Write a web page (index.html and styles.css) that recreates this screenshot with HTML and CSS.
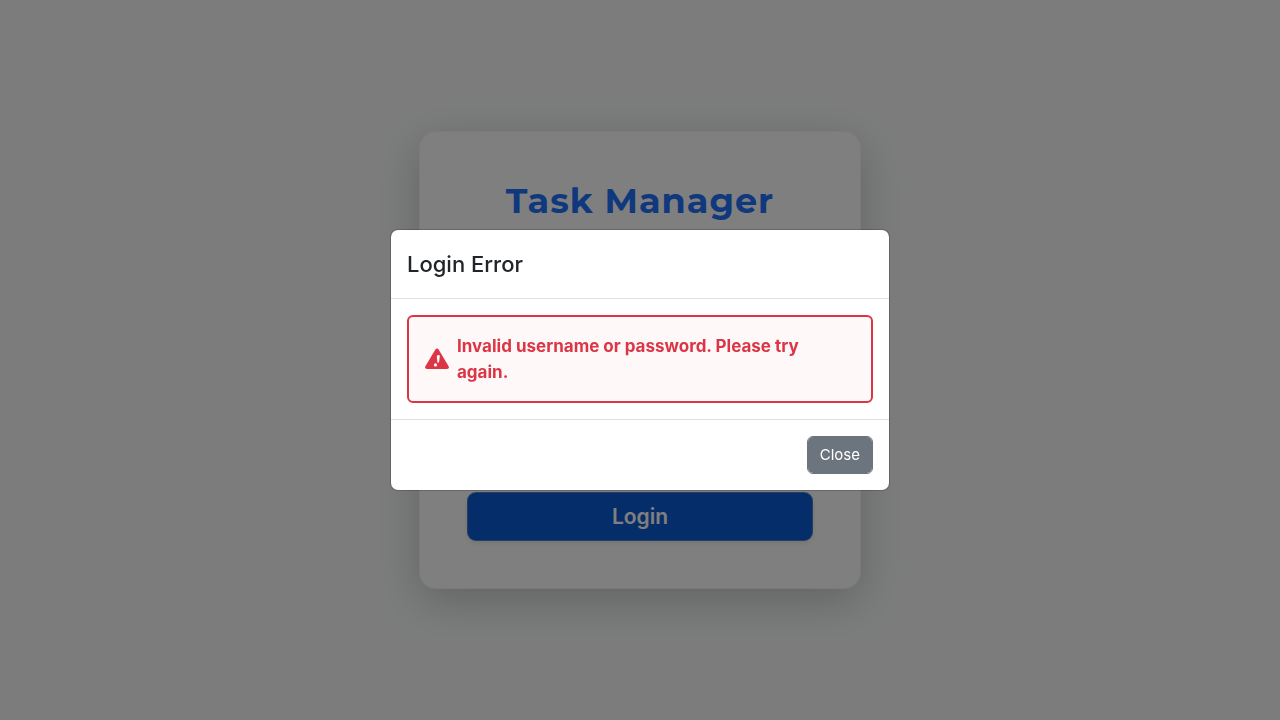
FILE: index.html
```html
<!DOCTYPE html>
<html lang="en">
<head>
<meta charset="utf-8">
<meta name="viewport" content="width=device-width, initial-scale=1">
<title>Task Manager</title>
<link rel="stylesheet" href="styles.css">
</head>
<body>
<main class="page">
  <section class="card">
    <h1 class="brand">Task Manager</h1>
    <button class="login" type="submit">Login</button>
  </section>
</main>
<div class="overlay">
  <div class="dialog" role="dialog" aria-modal="true" aria-labelledby="dialog-title">
    <header class="dialog-header">
      <h2 class="dialog-title" id="dialog-title">Login Error</h2>
    </header>
    <div class="dialog-body">
      <div class="alert" role="alert">
        <svg class="alert-icon" viewBox="0 0 24 24" aria-hidden="true">
          <path fill="#dc3545" d="M10.4 2.4Q12 .4 13.6 2.4L23.6 19.2Q24.6 21.9 22 22H2Q-.6 21.9.4 19.2Z"/>
          <path fill="#fff" d="M11.8 8.9Q13.2 7.4 14.9 8.6L14 15.4H12.4Z"/>
          <circle cx="10.5" cy="17.9" r="1.6" fill="#fff"/>
        </svg>
        <span>Invalid username or password. Please try again.</span>
      </div>
    </div>
    <footer class="dialog-footer">
      <button class="close" type="button">Close</button>
    </footer>
  </div>
</div>
</body>
</html>
```
FILE: styles.css
```css
* { box-sizing: border-box; }
body {
  margin: 0;
  font-family: Inter, "Liberation Sans", sans-serif;
  font-size: 16px;
  line-height: 24px;
  color: #212529;
  background: #f8f9fa;
}
.page {
  min-height: 100vh;
  display: grid;
  place-items: center;
}
.card {
  display: flex;
  flex-direction: column;
  justify-content: space-between;
  width: 100%;
  max-width: 440px;
  min-height: 456px;
  padding: 48px;
  border-radius: 16px;
  background: #fff;
  box-shadow: 0 0 0 1px #f4f4f4, 0 12px 44px rgba(0, 20, 10, 0.22);
}
.brand {
  margin: 0;
  font-family: Montserrat, Inter, sans-serif;
  font-size: 35px;
  font-weight: 700;
  line-height: 42px;
  letter-spacing: 1px;
  text-align: center;
  color: #2070f8;
}
.login {
  height: 47px;
  border: 0;
  border-radius: 8px;
  font: 600 21px/32px Inter, sans-serif;
  color: #fff;
  background: #0a5ad4;
  box-shadow: 0 0 0 1px #4a7cc4, 0 2px 6px rgba(0, 0, 0, 0.12);
}
.overlay {
  position: fixed;
  inset: 0;
  display: grid;
  place-items: center;
  background: rgba(0, 0, 0, 0.5);
}
.dialog {
  width: 100%;
  max-width: 500px;
  border: 1px solid rgba(0, 0, 0, 0.18);
  border-radius: 8px;
  background: #fff;
  background-clip: padding-box;
}
.dialog-header {
  padding: 16px;
  border-bottom: 1px solid #dee2e6;
}
.dialog-title {
  margin: 0;
  font-size: 22px;
  font-weight: 500;
  line-height: 36px;
}
.dialog-body { padding: 16px; }
.alert {
  display: flex;
  align-items: center;
  gap: 8px;
  padding: 16px 48px 16px 16px;
  border: 2px solid #dc3545;
  border-radius: 6px;
  font-size: 17px;
  font-weight: 700;
  line-height: 26px;
  color: #dc3545;
  background: #fff8f8;
}
.alert-icon {
  flex: none;
  width: 24px;
  height: 24px;
}
.dialog-footer {
  display: flex;
  justify-content: flex-end;
  padding: 16px;
  border-top: 1px solid #dee2e6;
}
.close {
  padding: 6px 12px;
  border: 1px solid #6c757d;
  border-radius: 6px;
  font: 400 15px/24px Inter, sans-serif;
  color: #fff;
  background: #6c757d;
  background-clip: padding-box;
}
```
